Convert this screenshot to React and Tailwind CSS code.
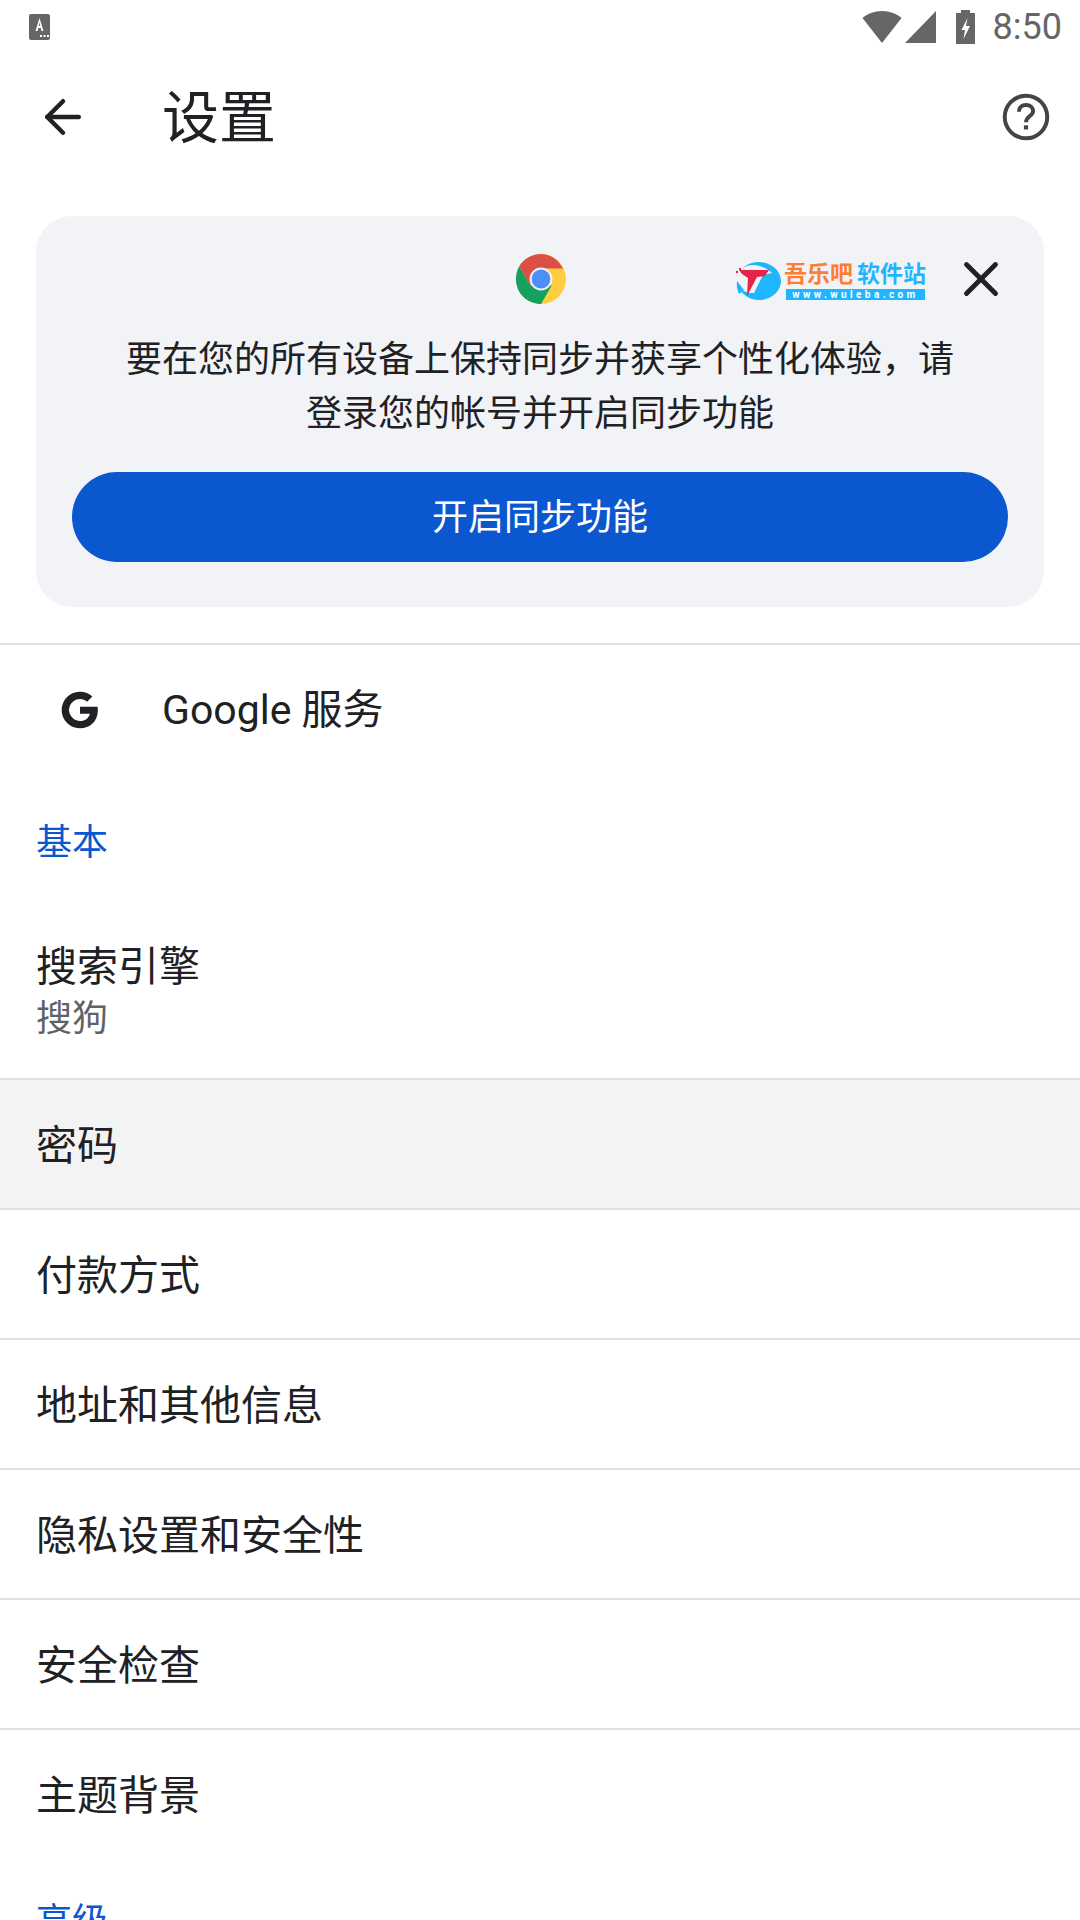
import { ArrowLeft, X } from 'lucide-react'

const rows = ['密码', '付款方式', '地址和其他信息', '隐私设置和安全性', '安全检查', '主题背景']

const StatusBar = () => (
  <div className="h-[54px] flex items-center justify-between pl-[28px] pr-[18px] text-[#666666]">
    <svg width="24" height="28" viewBox="0 0 24 28">
      <rect x="1" y="1" width="21" height="26" rx="2" fill="#666666" />
      <path d="M11.5 5 L7.5 18 H9.5 L10.3 15 H12.7 L13.5 18 H15.5 Z M10.8 13 L11.5 9.5 L12.2 13 Z" fill="#ffffff" />
      <rect x="12" y="22" width="2" height="2" fill="#ffffff" />
      <rect x="15.5" y="22" width="2" height="2" fill="#ffffff" />
      <rect x="19" y="22" width="2" height="2" fill="#ffffff" />
    </svg>
    <div className="flex items-center">
      <svg width="40" height="32" viewBox="0 0 40 32" className="mr-[3px]">
        <path d="M20 32 L0.5 7 C5 3 12 0 20 0 C28 0 35 3 39.5 7 Z" fill="#666666" />
      </svg>
      <svg width="32" height="32" viewBox="0 0 32 32" className="mr-[18px]">
        <path d="M31 0 V32 H0 Z" fill="#666666" />
      </svg>
      <svg width="22" height="34" viewBox="0 0 22 34" className="mr-[16px]">
        <path d="M6 0 H15 V3 H20 V34 H1 V3 H6 Z" fill="#666666" />
        <path d="M12.5 8 L6.5 20 H10 L8.5 29 L15 16 H11 Z" fill="#ffffff" />
      </svg>
      <span className="text-[36px] leading-none font-[Roboto,sans-serif]">8:50</span>
    </div>
  </div>
)

const ChromeIcon = () => (
  <svg width="50" height="50" viewBox="0 0 48 48" className="ml-[1px]">
    <circle cx="24" cy="24" r="24" fill="#ffcd40" />
    <path d="M24 0 C15 0 7 5 3 12 L13.6 30 L24 14 H45 C41 5.500 33 0 24 0 Z" fill="#db5046" />
    <path d="M3 12 C-1 19 -1 29 3 36 C7 43 15 48 24 48 L34.400 30 L13.600 30 Z" fill="#16a05d" />
    <circle cx="24" cy="24" r="11" fill="#f1f1f4" />
    <circle cx="24" cy="24" r="9" fill="#4e8ff7" />
  </svg>
)

const WulebaLogo = () => (
  <div className="flex items-center gap-[2px]">
    <svg width="46" height="38" viewBox="0 0 46 38">
      <path d="M7 6 C11 2 17 0 23 0 C35 0 45 8.500 45 19 C45 29.500 35 38 23 38 C15 38 8 34 4 28 L14 31 L18 31 L27 13 L36 11 C32 7 24 3 17 3 C13 3 10 4 7 6 Z" fill="#1fb6ff" />
      <path d="M3 32 C1 28 0.500 23 1 19 L8 28 Z" fill="#1fb6ff" />
      <path d="M3 8 H33 L29 14 L21 15 L11 34 L12 16 L6 12 Z" fill="#e6224a" />
      <rect x="0" y="9" width="2" height="2" fill="#e6224a" />
      <rect x="3" y="6" width="2" height="2" fill="#e6224a" />
    </svg>
    <div className="flex flex-col">
      <div className="h-[24px] flex items-center text-[23px] leading-none font-bold whitespace-nowrap">
        <span className="text-[#ff7d2e]">吾乐吧</span>
        <span className="text-[#1fb6ff] ml-[4px]">软件站</span>
      </div>
      <div className="mt-[2px] ml-[2px] bg-[#1fb6ff] h-[11px] w-[139px] text-white text-[10px] leading-[11px] tracking-[3.4px] font-bold text-center font-[Roboto,sans-serif] whitespace-nowrap">
        www.wuleba.com
      </div>
    </div>
  </div>
)

export default function App() {
  return (
    <div className="w-[1080px] h-[1920px] overflow-hidden bg-white text-[#202124] font-['Roboto','Noto_Sans_CJK_SC',sans-serif]">
      <StatusBar />

      {/* toolbar */}
      <div className="h-[124px] flex items-center pt-[2px] pl-[36px] pr-[29px]">
        <ArrowLeft size={54} strokeWidth={2} color="#202124" />
        <div className="ml-[72px] pt-[2px] text-[57px] leading-none flex-1">设置</div>
        <svg width="50" height="50" viewBox="0 0 24 24" fill="none">
          <circle cx="12" cy="12" r="10.200" stroke="#444444" strokeWidth="1.900" />
          <path d="M8.600 9.500 C8.600 7.500 10 6.200 12 6.200 C14 6.200 15.400 7.500 15.400 9.200 C15.400 11.500 12 11.600 12 14.500" stroke="#444444" strokeWidth="1.900" />
          <rect x="11" y="16" width="2" height="2" fill="#444444" />
        </svg>
      </div>

      {/* sync promo */}
      <div className="mx-[36px] mt-[38px] h-[391px] rounded-[36px] bg-[#f1f3f7] px-[36px] relative">
        <div className="flex justify-center pt-[38px] h-[102px]">
          <ChromeIcon />
        </div>
        <div className="absolute left-[700px] top-[46px]">
          <WulebaLogo />
        </div>
        <X size={58} strokeWidth={2} color="#202124" className="absolute right-[34px] top-[34px]" />
        <div className="text-center text-[36px] leading-[54px] mt-[15px]">
          <div>要在您的所有设备上保持同步并获享个性化体验{'\uFF0C'}请</div>
          <div>登录您的帐号并开启同步功能</div>
        </div>
        <button className="mt-[31px] w-full h-[90px] pt-[2px] rounded-full bg-[#0b57d0] text-white text-[36px]" type="button">
          开启同步功能
        </button>
      </div>

      <div className="mt-[36px] border-t-2 border-[#e0e0e0]" />

      {/* google services */}
      <div className="h-[130px] flex items-center pl-[60px]">
        <svg width="40" height="40" viewBox="0 0 48 48">
          <path
            fill="#202124"
            d="M24 20 V28.500 H35.800 C35.300 31.300 33.800 33.500 31.600 35 C29.600 36.400 27 37.200 24 37.200 C18.200 37.200 13.300 33.300 11.600 28 C11.100 26.800 10.800 25.400 10.800 24 C10.800 22.600 11.100 21.200 11.600 20 C13.300 14.700 18.200 10.800 24 10.800 C27.300 10.800 30.200 11.900 32.500 14.100 L38.800 7.800 C35 4.300 30 2 24 2 C15.400 2 8 6.900 4.400 14 C2.900 17 2 20.400 2 24 C2 27.600 2.900 31 4.400 34 C8 41.100 15.400 46 24 46 C30 46 35 44 38.700 40.600 C42.900 36.700 45.400 31 45.400 24.500 C45.400 22.900 45.300 21.400 45 20 Z"
          />
        </svg>
        <div className="ml-[62px] text-[41px] leading-none">Google 服务</div>
      </div>

      <div className="h-[72px] mt-[32px] pl-[36px] flex items-center text-[36px] text-[#0b57d0]">基本</div>

      <div className="mt-[52px] h-[147px] pl-[36px]">
        <div className="text-[41px] leading-[52px] pt-[10px]">搜索引擎</div>
        <div className="text-[36px] leading-[52px] text-[#5f6368]">搜狗</div>
      </div>

      {rows.map((label, i) => (
        <div
          key={label}
          className={`h-[128px] box-content border-t-2 border-[#e0e0e0] pl-[36px] pt-[0px] flex items-center text-[41px] ${i === 0 ? 'bg-[#f3f3f4]' : ''}`}
        >
          <span className="pt-[5px]">{label}</span>
        </div>
      ))}

      <div className="mt-[28px] pl-[36px] text-[36px] leading-[72px] text-[#0b57d0]">高级</div>
    </div>
  )
}
